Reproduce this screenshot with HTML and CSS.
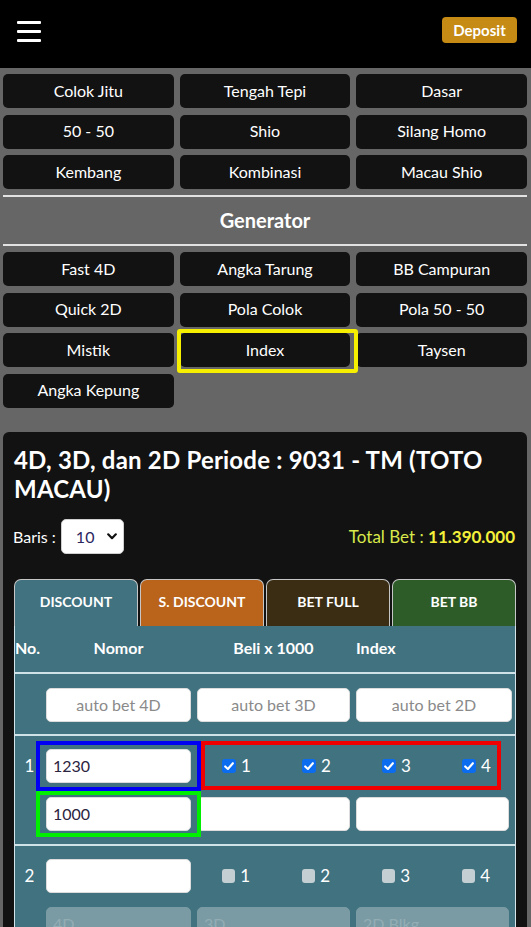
FILE: index.html
```html
<!DOCTYPE html>
<html lang="id">
<head>
<meta charset="utf-8">
<title>Index</title>
<link rel="stylesheet" href="styles.css">
</head>
<body>
<header class="topbar">
  <button class="burger" aria-label="Menu"><span></span><span></span><span></span></button>
  <a class="deposit">Deposit</a>
</header>

<nav class="menu">
  <div class="grid">
    <button class="btn">Colok Jitu</button>
    <button class="btn">Tengah Tepi</button>
    <button class="btn">Dasar</button>
    <button class="btn">50 - 50</button>
    <button class="btn">Shio</button>
    <button class="btn">Silang Homo</button>
    <button class="btn">Kembang</button>
    <button class="btn">Kombinasi</button>
    <button class="btn">Macau Shio</button>
  </div>
  <div class="section-title">Generator</div>
  <div class="grid">
    <button class="btn">Fast 4D</button>
    <button class="btn">Angka Tarung</button>
    <button class="btn">BB Campuran</button>
    <button class="btn">Quick 2D</button>
    <button class="btn">Pola Colok</button>
    <button class="btn">Pola 50 - 50</button>
    <button class="btn">Mistik</button>
    <button class="btn marked">Index</button>
    <button class="btn">Taysen</button>
    <button class="btn">Angka Kepung</button>
  </div>
</nav>

<section class="card">
  <h1 class="title">4D, 3D, dan 2D Periode : 9031 - TM (TOTO MACAU)</h1>
  <div class="controls">
    <label class="baris">Baris :
      <span class="select">
        <select><option>10</option><option>20</option></select>
        <svg class="chev" viewBox="0 0 10 7" width="10" height="7"><path d="M1.2 1.3 L5 5.2 L8.8 1.3" fill="none" stroke="#111" stroke-width="2.2" stroke-linecap="round" stroke-linejoin="round"/></svg>
      </span>
    </label>
    <div class="total">Total Bet : <b>11.390.000</b></div>
  </div>

  <div class="tabs">
    <div class="tab t1">DISCOUNT</div>
    <div class="tab t2">S. DISCOUNT</div>
    <div class="tab t3">BET FULL</div>
    <div class="tab t4">BET BB</div>
  </div>

  <div class="table">
    <div class="row head">
      <div class="h-no">No.</div>
      <div class="h-c">Nomor</div>
      <div class="h-c">Beli x 1000</div>
      <div class="h-l">Index</div>
    </div>

    <div class="row auto">
      <div></div>
      <input class="inp center" placeholder="auto bet 4D">
      <input class="inp center" placeholder="auto bet 3D">
      <input class="inp center" placeholder="auto bet 2D">
    </div>

    <div class="row entry">
      <div class="num">1</div>
      <div class="cell mark-blue"><input class="inp" value="1230"></div>
      <div class="checks mark-red">
        <label class="chk"><span class="box on"><svg viewBox="0 0 14 14" width="14" height="14"><path d="M3.2 7.4 L5.9 10 L10.9 4.2" fill="none" stroke="#fff" stroke-width="2.1" stroke-linecap="round" stroke-linejoin="round"/></svg></span>1</label>
        <label class="chk"><span class="box on"><svg viewBox="0 0 14 14" width="14" height="14"><path d="M3.2 7.4 L5.9 10 L10.9 4.2" fill="none" stroke="#fff" stroke-width="2.1" stroke-linecap="round" stroke-linejoin="round"/></svg></span>2</label>
        <label class="chk"><span class="box on"><svg viewBox="0 0 14 14" width="14" height="14"><path d="M3.2 7.4 L5.9 10 L10.9 4.2" fill="none" stroke="#fff" stroke-width="2.1" stroke-linecap="round" stroke-linejoin="round"/></svg></span>3</label>
        <label class="chk"><span class="box on"><svg viewBox="0 0 14 14" width="14" height="14"><path d="M3.2 7.4 L5.9 10 L10.9 4.2" fill="none" stroke="#fff" stroke-width="2.1" stroke-linecap="round" stroke-linejoin="round"/></svg></span>4</label>
      </div>
      <div class="c2 cell mark-green"><input class="inp" value="1000"></div>
      <input class="inp c3">
      <input class="inp c4 narrow">
    </div>

    <div class="row entry">
      <div class="num">2</div>
      <div class="cell"><input class="inp"></div>
      <div class="checks">
        <label class="chk"><span class="box"></span>1</label>
        <label class="chk"><span class="box"></span>2</label>
        <label class="chk"><span class="box"></span>3</label>
        <label class="chk"><span class="box"></span>4</label>
      </div>
      <input class="inp dis c2" placeholder="4D" disabled>
      <input class="inp dis c3" placeholder="3D" disabled>
      <input class="inp dis c4 narrow" placeholder="2D Blkg" disabled>
    </div>
  </div>
</section>
</body>
</html>
```

FILE: styles.css
```css
* { box-sizing: border-box; }

body {
  margin: 0;
  background: #666666;
  font-family: Lato, "Liberation Sans", sans-serif;
  color: #fff;
}

/* top bar */
.topbar {
  height: 68px;
  background: #000;
  display: flex;
  justify-content: space-between;
  align-items: flex-start;
  padding: 17px 14px 0 17px;
}
.burger {
  width: 24px;
  display: flex;
  flex-direction: column;
  gap: 6px;
  margin-top: 4px;
  background: none;
  border: 0;
  padding: 0;
}
.burger span {
  display: block;
  height: 3px;
  background: #fff;
  border-radius: 1px;
}
.deposit {
  width: 75px;
  height: 26px;
  background: #c58b14;
  border-radius: 4px;
  font-weight: 700;
  font-size: 15px;
  color: #fff;
  display: flex;
  align-items: center;
  justify-content: center;
}

/* menu */
.menu { padding: 6px 4px 0 3px; }
.grid {
  display: grid;
  grid-template-columns: repeat(3, 1fr);
  gap: 6.5px 6px;
}
.btn {
  height: 34px;
  background: #121212;
  border: 0;
  border-radius: 5px;
  color: #fff;
  font-family: inherit;
  font-size: 16px;
  display: flex;
  align-items: center;
  justify-content: center;
  padding: 0 0 2px;
}
.marked { position: relative; }
.marked::after {
  content: "";
  position: absolute;
  left: -3px;
  right: -8px;
  top: -4px;
  bottom: -6px;
  border: 4px solid #f6f000;
  border-radius: 3px;
  pointer-events: none;
}
.section-title {
  margin: 6px 0;
  border-top: 2px solid #e2e2e2;
  border-bottom: 2px solid #e2e2e2;
  height: 51px;
  line-height: 47px;
  text-align: center;
  font-weight: 700;
  font-size: 20px;
}

/* card */
.card {
  margin: 24px 4px 0 3px;
  background: #121212;
  border-radius: 6px;
  padding: 13px 11px 0;
}
.title {
  margin: 0;
  font-weight: 700;
  font-size: 24px;
  line-height: 29px;
  letter-spacing: 0.2px;
}
.controls {
  margin-top: 16px;
  display: flex;
  justify-content: space-between;
  align-items: center;
  padding-right: 1px;
}
.baris {
  font-size: 16px;
  display: flex;
  align-items: center;
  gap: 5px;
  margin-left: -1px;
}
.select {
  position: relative;
  width: 63px;
  height: 35px;
  display: block;
}
.select select {
  appearance: none;
  -webkit-appearance: none;
  width: 100%;
  height: 100%;
  border: 1px solid #cfcfcf;
  border-radius: 5px;
  background: #fff;
  font-family: inherit;
  font-size: 16px;
  color: #2a2660;
  padding: 0 0 0 14px;
}
.chev {
  position: absolute;
  right: 7px;
  top: 14px;
  pointer-events: none;
}
.total {
  font-size: 17px;
  color: #d9e84a;
}
.total b { color: #f4f03a; }

/* tabs */
.tabs {
  margin-top: 25px;
  display: flex;
  gap: 2px;
  height: 47px;
}
.tab {
  flex: 1;
  border: 1px solid #c6c6c6;
  border-bottom: 0;
  border-radius: 7px 7px 0 0;
  font-weight: 700;
  font-size: 14px;
  display: flex;
  align-items: center;
  justify-content: center;
  padding-bottom: 2px;
}
.t1 { background: #41727f; }
.t2 { background: #b9631b; }
.t3 { background: #3a2d13; }
.t4 { background: #2e5c29; }

/* table */
.table {
  background: #41727f;
  border-left: 1px solid #d3e5eb;
  border-right: 1px solid #d3e5eb;
}
.row {
  display: grid;
  grid-template-columns: 25px 145px 153px 156px;
  column-gap: 6px;
  border-bottom: 2px solid #cfe2e8;
}
.head {
  height: 48px;
  align-items: center;
  font-weight: 700;
  font-size: 16px;
  padding-bottom: 2px;
}
.h-c { text-align: center; }
.h-l { text-align: left; }
.auto { padding: 14px 0 12px; }
.entry {
  padding: 13px 0 13px;
  row-gap: 14px;
  align-items: center;
}
.num {
  font-size: 17px;
  text-align: center;
  padding-left: 4px;
}
.inp {
  height: 34px;
  width: 100%;
  border: 1px solid #dcdcdc;
  border-radius: 5px;
  background: #fff;
  font-family: inherit;
  font-size: 16px;
  color: #2b2440;
  padding: 0 6px;
}
.inp::placeholder { color: #8a8a8a; }
.center { text-align: center; }
.narrow { width: 153px; }
.dis {
  background: #7a9ba4;
  border-color: #7a9ba4;
}
.dis::placeholder { color: #93adb4; }
.cell { position: relative; }
.c2 { grid-column: 2; }
.c3 { grid-column: 3; }
.c4 { grid-column: 4; }

.checks {
  grid-column: 3 / span 2;
  position: relative;
  height: 34px;
  display: flex;
  align-items: center;
  gap: 52px;
  padding-left: 25px;
}
.chk {
  width: 28px;
  flex: none;
  display: flex;
  align-items: center;
  gap: 5px;
  font-size: 17px;
}
.box {
  width: 14px;
  height: 14px;
  border-radius: 3px;
  background: #c3cfd3;
  display: block;
}
.box.on { background: #0b6cf0; }
.box svg { display: block; }

/* annotation frames */
.mark-blue::after,
.mark-green::after,
.mark-red::after {
  content: "";
  position: absolute;
  pointer-events: none;
  z-index: 1;
}
.mark-blue::after {
  left: -10px; right: -10px; top: -8px; bottom: -8px;
  border: 4px solid #0000f2;
}
.mark-green::after {
  left: -10px; right: -10px; top: -6px; bottom: -6px;
  border: 4px solid #00ee00;
}
.mark-red::after {
  left: 4px; right: 11px; top: -8px; bottom: -7px;
  border: 4px solid #f00000;
}
```
